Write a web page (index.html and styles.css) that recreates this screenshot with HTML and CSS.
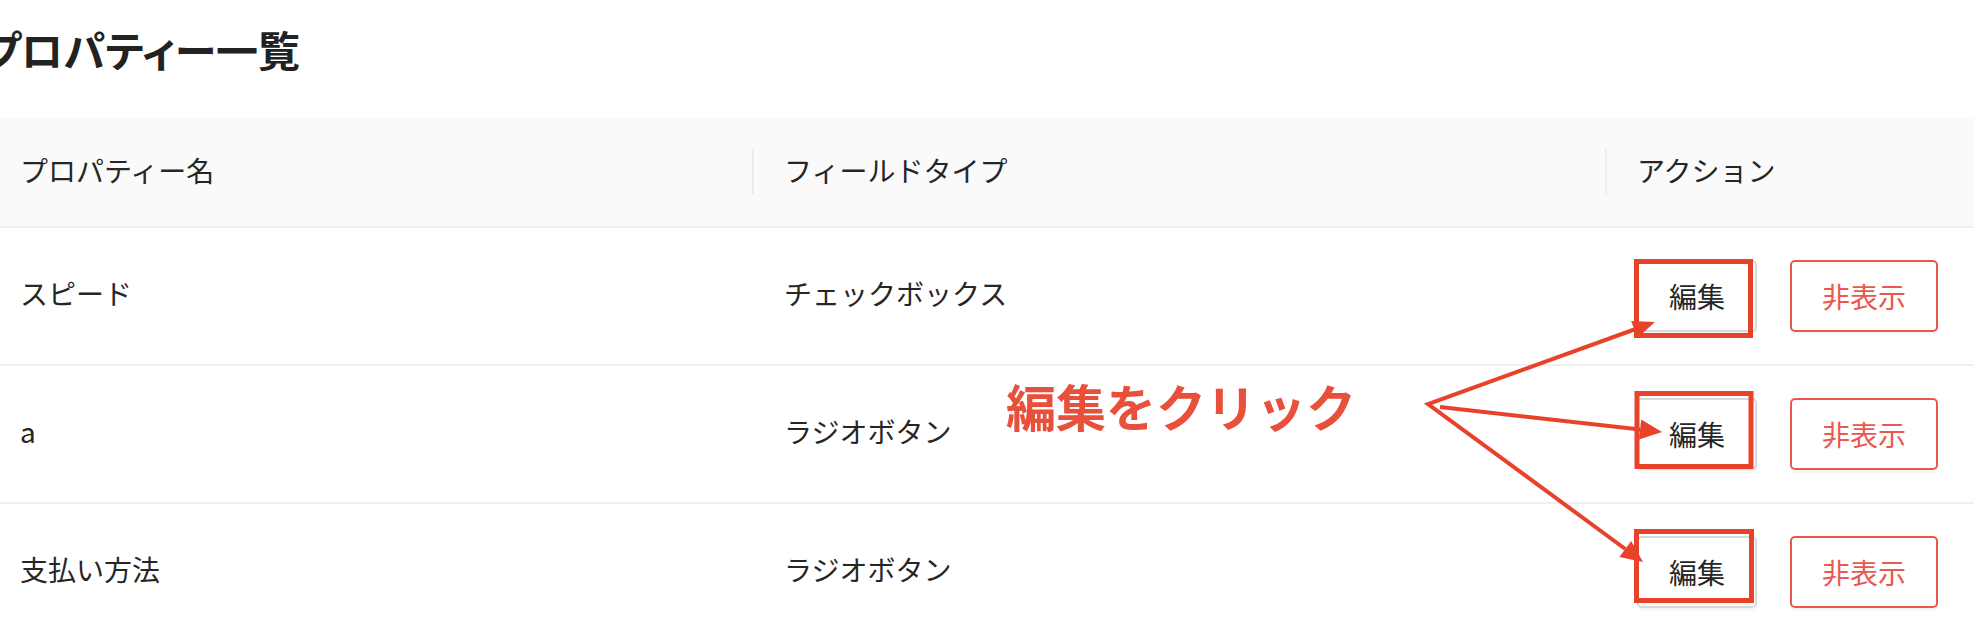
FILE: index.html
```html
<!DOCTYPE html>
<html lang="ja">
<head>
<meta charset="utf-8">
<title>プロパティー一覧</title>
<link rel="stylesheet" href="styles.css">
</head>
<body>
<div class="page">
  <h1 class="title">プロパティー一覧</h1>
  <table class="table">
    <colgroup>
      <col class="col-name">
      <col class="col-type">
      <col class="col-action">
    </colgroup>
    <thead>
      <tr>
        <th>プロパティー名</th>
        <th class="sep">フィールドタイプ</th>
        <th class="sep">アクション</th>
      </tr>
    </thead>
    <tbody>
      <tr>
        <td class="cell-text">スピード</td>
        <td class="cell-text">チェックボックス</td>
        <td><div class="actions"><button class="btn">編集</button><button class="btn btn-danger">非表示</button></div></td>
      </tr>
      <tr>
        <td class="cell-text">a</td>
        <td class="cell-text">ラジオボタン</td>
        <td><div class="actions"><button class="btn">編集</button><button class="btn btn-danger">非表示</button></div></td>
      </tr>
      <tr>
        <td class="cell-text">支払い方法</td>
        <td class="cell-text">ラジオボタン</td>
        <td><div class="actions"><button class="btn">編集</button><button class="btn btn-danger">非表示</button></div></td>
      </tr>
    </tbody>
  </table>
</div>

<svg class="annot" width="1974" height="638" viewBox="0 0 1974 638" xmlns="http://www.w3.org/2000/svg">
  <g fill="none" stroke="#e8432a" stroke-width="5">
    <rect x="1636.5" y="261.5" width="114" height="74"/>
    <rect x="1637" y="393.5" width="114" height="73"/>
    <rect x="1636.5" y="531.5" width="115" height="69"/>
  </g>
  <g fill="none" stroke="#e8432a" stroke-width="4" stroke-linejoin="miter">
    <polyline points="1634.3,329.5 1428,404 1625.3,549"/>
    <line x1="1440" y1="407" x2="1640.1" y2="429.5"/>
  </g>
  <g fill="#e8432a">
    <polygon points="1655,322 1637.4,338 1631.2,321"/>
    <polygon points="1662,432 1639,439.4 1641.2,419.6"/>
    <polygon points="1643,562 1619.4,557.1 1631.2,540.9"/>
  </g>
</svg>
<div class="annot-text">編集をクリック</div>
</body>
</html>
```

FILE: styles.css
```css
html, body {
  margin: 0;
  padding: 0;
  background: #ffffff;
}

body {
  font-family: "Noto Sans CJK JP", "Noto Sans", sans-serif;
  color: #262626;
  width: 1974px;
  height: 638px;
  overflow: hidden;
  position: relative;
}

.page {
  margin-left: -12px;
  width: 1986px;
}

.title {
  margin: 21px 0 41px -6px;
  font-size: 42px;
  line-height: 56px;
  font-weight: 700;
  color: #222222;
  font-feature-settings: "palt";
}

.table {
  width: 1986px;
  border-collapse: collapse;
  table-layout: fixed;
  font-size: 28px;
}

.col-name { width: 764px; }
.col-type { width: 853px; }
.col-action { width: 369px; }

.table th {
  position: relative;
  background: #fafafa;
  font-weight: 400;
  text-align: left;
  padding: 30px 32px 34px;
  line-height: 44px;
  border-bottom: 2px solid #f0f0f0;
  color: #262626;
}

.table th.sep::before {
  content: "";
  position: absolute;
  left: 0;
  top: 31px;
  width: 2px;
  height: 45px;
  background: rgba(0, 0, 0, 0.06);
}

.table td {
  padding: 32px;
  line-height: 44px;
  border-bottom: 2px solid #f0f0f0;
  vertical-align: middle;
}

.table td.cell-text {
  padding: 29px 32px 35px;
}

.actions {
  display: flex;
  gap: 33px;
  align-items: center;
}

.btn {
  height: 72px;
  padding: 0 30px;
  font-family: inherit;
  font-size: 28px;
  line-height: 68px;
  color: #262626;
  background: #ffffff;
  border: 2px solid #d9d9d9;
  border-radius: 5px;
  box-shadow: 0 3px 0 rgba(0, 0, 0, 0.03);
  white-space: nowrap;
}

.btn-danger {
  color: #e9574f;
  border-color: #e9574f;
}

.annot {
  position: absolute;
  left: 0;
  top: 0;
  pointer-events: none;
}

.annot-text {
  position: absolute;
  left: 1006px;
  top: 380px;
  font-size: 50px;
  line-height: 50px;
  font-weight: 700;
  color: #e8503c;
  white-space: nowrap;
}
```
